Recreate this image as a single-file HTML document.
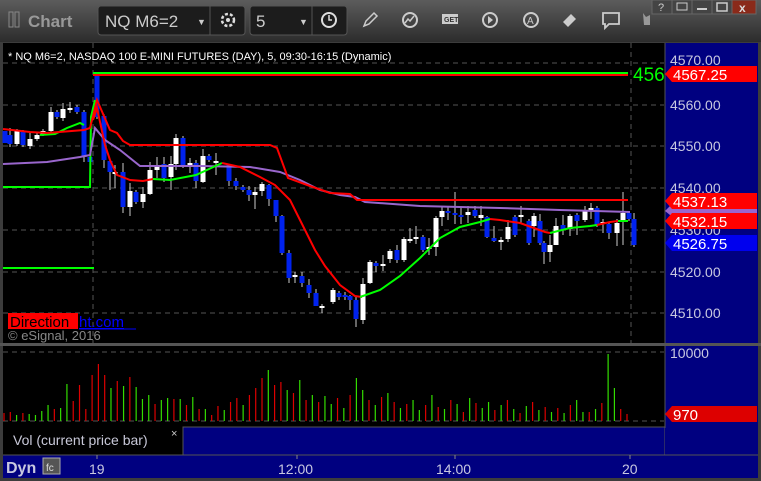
<!DOCTYPE html>
<html><head><meta charset="utf-8"><style>
html,body{margin:0;padding:0;width:761px;height:481px;overflow:hidden;background:#3a3a3a;font-family:"Liberation Sans",sans-serif}
</style></head><body>
<svg width="761" height="481" xmlns="http://www.w3.org/2000/svg" font-family="Liberation Sans, sans-serif">
<defs><linearGradient id="tb" x1="0" y1="0" x2="0" y2="1"><stop offset="0" stop-color="#5c5c5c"/><stop offset="1" stop-color="#2c2c2c"/></linearGradient></defs>
<rect width="761" height="481" fill="#3c3c3c"/>
<rect width="761" height="42" fill="url(#tb)"/>
<rect x="9" y="12" width="4" height="15" fill="none" stroke="#888"/><rect x="15" y="12" width="4" height="15" fill="none" stroke="#888"/>
<text x="28" y="27" font-size="17" font-weight="bold" fill="#999">Chart</text>
<rect x="98" y="6" width="147" height="29" rx="3" fill="#1c1c1c" stroke="#555"/>
<line x1="210" y1="6" x2="210" y2="35" stroke="#555"/>
<text x="105" y="27" font-size="17" fill="#ccc">NQ M6=2</text>
<text x="197" y="25" font-size="9" fill="#ccc">▼</text>
<circle cx="228" cy="20" r="6" fill="none" stroke="#ddd" stroke-width="2.5" stroke-dasharray="3 2"/><circle cx="228" cy="20" r="2" fill="#ddd"/>
<rect x="250" y="6" width="97" height="29" rx="3" fill="#1c1c1c" stroke="#555"/>
<line x1="312" y1="6" x2="312" y2="35" stroke="#555"/>
<text x="256" y="27" font-size="17" fill="#ccc">5</text>
<text x="299" y="25" font-size="9" fill="#ccc">▼</text>
<circle cx="329" cy="20" r="7" fill="none" stroke="#ddd" stroke-width="2"/><path d="M329 15v5h3" stroke="#ddd" stroke-width="1.5" fill="none"/>
<path d="M364 26l2-5 8-8 3 3-8 8z" fill="none" stroke="#ccc" stroke-width="1.5"/>
<circle cx="410" cy="20" r="7" fill="none" stroke="#ccc" stroke-width="2"/><path d="M405 23l3-4 2 2 4-5" stroke="#ccc" fill="none" stroke-width="1.5"/>
<rect x="442" y="14" width="16" height="10" fill="#ccc"/><text x="444" y="22" font-size="7" font-weight="bold" fill="#333">GET</text>
<circle cx="490" cy="20" r="7" fill="none" stroke="#ccc" stroke-width="2"/><path d="M488 16v8l5-4z" fill="#ccc"/>
<circle cx="531" cy="20" r="7" fill="none" stroke="#ccc" stroke-width="2"/><text x="527" y="24" font-size="10" fill="#ccc">A</text>
<path d="M563 22l8-8 5 5-8 8z" fill="#ccc"/>
<path d="M603 13h16v11h-10l-4 4v-4h-2z" fill="none" stroke="#ccc" stroke-width="1.8"/>
<path d="M643 13l3 4 4-2v10h-6z" fill="#999"/>
<rect x="652" y="0" width="20" height="14" fill="#444" stroke="#666"/><text x="658" y="11" font-size="11" fill="#ccc">?</text>
<rect x="672" y="0" width="20" height="14" fill="#444" stroke="#666"/><rect x="677" y="3" width="10" height="7" fill="none" stroke="#ccc"/>
<rect x="692" y="0" width="20" height="14" fill="#444" stroke="#666"/><rect x="697" y="8" width="10" height="2" fill="#ccc"/>
<rect x="712" y="0" width="20" height="14" fill="#444" stroke="#666"/><rect x="717" y="3" width="10" height="8" fill="none" stroke="#ccc" stroke-width="1.5"/>
<rect x="732" y="0" width="24" height="14" fill="#8a2a1a" stroke="#666"/><text x="739" y="12" font-size="12" font-weight="bold" fill="#ddd">x</text>

<rect x="3" y="43" width="662" height="300" fill="#000"/>
<rect x="665" y="43" width="93" height="300" fill="#000080"/>
<line x1="665" y1="43" x2="665" y2="343" stroke="#555"/>
<g stroke="#555" stroke-dasharray="5 4">
<line x1="3" y1="63" x2="664" y2="63"/><line x1="3" y1="105" x2="664" y2="105"/><line x1="3" y1="146" x2="664" y2="146"/><line x1="3" y1="188" x2="664" y2="188"/><line x1="3" y1="230" x2="664" y2="230"/><line x1="3" y1="272" x2="664" y2="272"/><line x1="3" y1="313" x2="664" y2="313"/>
<line x1="93" y1="43" x2="93" y2="343"/><line x1="631" y1="43" x2="631" y2="343"/>
</g>
<text x="8" y="60" font-size="11" fill="#fff">* NQ M6=2, NASDAQ 100 E-MINI FUTURES (DAY), 5, 09:30-16:15 (Dynamic)</text>
<g id="candles"></g>
<g fill="none" stroke-width="2">
<polyline stroke="#00ff00" points="3,187 90,187 91,117 95,100"/>
<polyline stroke="#00ff00" points="3,268 94,268"/>
<polyline stroke="#00ff00" points="40,135 55,134 67,128 80,123 84,125"/>
<polyline stroke="#9966cc" points="3,164 47,162 80,157 90,155 95,128 105,140 120,150 140,166 200,166 250,167 280,172 300,180 320,190 340,195 355,197 365,202 420,206 500,208 560,210 630,212"/>
<polyline stroke="#ff0000" points="3,129 30,132 47,133 84,130 90,128 97,100 110,130 117,133 123,141 130,145 270,145 277,148 288,178 310,186 330,193 350,194 357,200 628,200"/>
<polyline stroke="#ff0000" points="93,120 97,108 105,145 110,160 117,175 130,180 143,181 153,179"/>
<polyline stroke="#00ff00" points="153,179 170,180 196,175 222,163"/>
<polyline stroke="#ff0000" points="222,163 240,167 260,177 275,185 290,200 300,220 315,250 325,266 340,285 355,296 362,297"/>
<polyline stroke="#00ff00" points="360,297 380,290 400,276 420,258 440,238 460,227 480,222 490,219"/>
<polyline stroke="#ff0000" points="490,219 500,220 520,223 545,232 550,233"/>
<polyline stroke="#00ff00" points="550,233 570,228 590,226 597,225"/>
<polyline stroke="#ff0000" points="597,225 610,222 618,221"/>
<polyline stroke="#00ff00" points="618,221 628,221"/>
<line stroke="#00ff00" x1="93" y1="73" x2="628" y2="73"/>
<line stroke="#ff0000" x1="93" y1="75" x2="628" y2="75"/>
</g>
<text x="633" y="81" font-size="19" fill="#00ff00">456</text>
<g font-size="14" fill="#c8c8e0">
<text x="670" y="65">4570.00</text><text x="670" y="110">4560.00</text><text x="670" y="151">4550.00</text><text x="670" y="193">4540.00</text><text x="670" y="235">4530.00</text><text x="670" y="277">4520.00</text><text x="670" y="318">4510.00</text>
</g>
<polygon points="665,74 672,66 757,66 757,82 672,82" fill="#ff0000"/><text x="673" y="80" font-size="15" fill="#fff">4567.25</text>
<polygon points="665,211 670,206 757,206 757,215 670,215" fill="#9966cc"/>
<polygon points="665,201 672,193 757,193 757,209 672,209" fill="#ff0000"/><text x="673" y="207" font-size="15" fill="#fff">4537.13</text>
<polygon points="665,221 672,213 757,213 757,229 672,229" fill="#ff0000"/><text x="673" y="227" font-size="15" fill="#fff">4532.15</text>
<polygon points="665,243 672,235 757,235 757,251 672,251" fill="#0000ee"/><text x="673" y="249" font-size="15" fill="#fff">4526.75</text>
<rect x="8" y="313" width="70" height="16" fill="#ff0000"/><text x="10" y="327" font-size="15" fill="#000">Direction</text>
<text x="79" y="327" font-size="15" fill="#0000ff" text-decoration="underline">ht.com</text>
<line x1="79" y1="329" x2="136" y2="329" stroke="#0000ff"/>
<text x="8" y="340" font-size="13" fill="#888">© eSignal, 2016</text>
<rect x="0" y="343" width="761" height="3" fill="#555"/>
<rect x="3" y="346" width="662" height="82" fill="#000"/>
<rect x="665" y="346" width="93" height="82" fill="#000080"/>
<line x1="665" y1="346" x2="665" y2="428" stroke="#555"/>
<g stroke="#555" stroke-dasharray="5 4"><line x1="3" y1="352" x2="664" y2="352"/><line x1="3" y1="421" x2="664" y2="421"/></g>
<g id="vols"></g>
<text x="670" y="358" font-size="14" fill="#c8c8e0">10000</text>
<polygon points="665,414 672,406 757,406 757,422 672,422" fill="#dd0000"/><text x="673" y="420" font-size="15" fill="#fff">970</text>
<rect x="3" y="428" width="180" height="27" fill="#000"/>
<text x="13" y="445" font-size="14" fill="#c8c8d8">Vol (current price bar)</text>
<text x="171" y="437" font-size="11" fill="#ccc">×</text>
<rect x="183" y="427" width="482" height="28" fill="#000080" stroke="#555"/>
<rect x="665" y="428" width="93" height="27" fill="#000080"/>
<rect x="3" y="455" width="755" height="23" fill="#000080"/>
<line x1="3" y1="455" x2="758" y2="455" stroke="#555"/>
<text x="6" y="473" font-size="16" font-weight="bold" fill="#c8c8e0">Dyn</text>
<rect x="43" y="458" width="17" height="16" fill="#555" stroke="#aaa"/><text x="46" y="471" font-size="10" fill="#ddd">fc</text>
<g font-size="14" fill="#c8c8e0"><text x="89" y="474">19</text><text x="278" y="474">12:00</text><text x="436" y="474">14:00</text><text x="622" y="474">20</text></g>
<g stroke="#888"><line x1="97" y1="455" x2="97" y2="459"/><line x1="297" y1="455" x2="297" y2="459"/><line x1="455" y1="455" x2="455" y2="459"/><line x1="630" y1="455" x2="630" y2="459"/></g>
</svg>
<script>
var C=[[5,131,143,131,143,0],[10,135,144,128,147,0],[17,131,144,129,146,1],[23,131,145,130,147,0],[30,139,146,133,149,1],[37,135,139,133,141,1],[43,131,134,129,136,1],[51,112,131,107,134,1],[57,112,117,110,119,0],[63,109,118,103,121,1],[70,108,110,102,113,1],[77,107,112,105,114,0],[84,112,157,110,162,0],[90,157,162,155,170,0],[97,75,117,74,119,0],[104,116,160,114,168,0],[110,161,172,160,190,0],[115,172,173,165,188,1],[123,172,207,163,213,0],[130,191,207,183,216,1],[136,192,202,190,204,0],[143,194,202,187,208,1],[150,170,194,162,195,1],[157,165,170,157,178,1],[164,164,178,157,182,0],[171,164,177,156,190,1],[176,138,164,134,170,1],[183,138,166,136,168,0],[190,163,165,158,173,1],[196,163,181,160,188,0],[203,156,182,149,183,1],[209,156,160,154,162,0],[216,161,163,153,175,1],[229,165,181,165,186,0],[236,181,186,178,190,0],[243,187,190,185,192,0],[249,190,195,186,201,0],[255,192,195,187,209,1],[262,184,191,182,196,1],[269,185,199,184,206,0],[276,200,216,200,222,0],[282,216,253,215,255,0],[289,253,278,250,283,0],[295,275,277,272,283,1],[302,276,283,272,287,0],[309,285,293,279,298,0],[316,293,306,289,306,0],[322,306,308,304,313,1],[333,290,302,288,304,1],[339,293,297,291,300,0],[345,295,297,292,300,0],[350,296,300,295,310,0],[356,300,319,297,327,0],[363,284,320,278,324,1],[370,262,283,260,284,1],[376,263,266,261,272,0],[383,264,266,255,271,1],[390,251,259,249,263,1],[397,250,260,245,263,0],[404,239,260,237,262,1],[410,239,240,228,243,1],[416,237,239,226,244,1],[423,237,250,235,252,0],[429,247,248,238,255,1],[436,218,247,216,256,1],[442,211,217,206,226,1],[448,211,213,206,220,0],[455,213,215,192,224,0],[461,215,217,207,224,0],[468,212,215,206,223,1],[475,210,216,206,218,0],[481,215,218,206,226,1],[487,217,237,216,238,0],[494,238,241,226,242,0],[501,240,242,237,250,1],[508,227,239,220,242,1],[515,217,235,215,237,0],[521,215,217,206,223,1],[529,221,243,219,245,0],[534,216,226,213,237,1],[540,221,243,214,245,0],[544,243,252,241,264,0],[550,245,252,235,262,1],[556,226,245,218,245,1],[563,225,230,215,235,0],[570,216,229,214,236,1],[577,215,221,213,235,0],[585,210,220,206,222,1],[591,208,210,203,219,1],[597,208,225,206,227,0],[603,222,224,219,233,1],[609,224,233,222,239,0],[617,223,233,219,246,1],[623,213,221,192,245,1],[629,213,219,211,221,0],[634,219,245,213,247,0]];
var ns="http://www.w3.org/2000/svg",g=document.getElementById("candles"),s="";
C.forEach(function(c){var col=c[5]?"#fff":"#0022ee";s+='<line x1="'+c[0]+'" x2="'+c[0]+'" y1="'+c[3]+'" y2="'+c[4]+'" stroke="#ccc"/>';s+='<rect x="'+(c[0]-2.5)+'" y="'+c[1]+'" width="5" height="'+Math.max(2,c[2]-c[1])+'" fill="'+col+'"/>';});
g.innerHTML=s;
var V=[[413,0],[412,0],[415,1],[413,0],[414,1],[415,1],[411,1],[405,1],[409,0],[408,1],[384,1],[401,0],[385,0],[409,0],[375,0],[364,0],[375,0],[388,1],[381,0],[386,1],[377,0],[387,1],[399,1],[395,1],[404,0],[400,1],[398,1],[399,0],[399,1],[405,0],[397,1],[409,0],[409,1],[415,0],[406,0],[410,1],[402,0],[398,0],[405,1],[395,0],[388,0],[378,0],[370,1],[385,0],[382,0],[390,1],[393,0],[380,1],[400,0],[395,1],[402,0],[396,1],[404,1],[398,0],[408,1],[395,0],[378,1],[390,1],[400,0],[405,1],[397,0],[393,1],[402,0],[408,1],[404,0],[400,1],[410,1],[405,0],[395,1],[407,0],[409,1],[400,0],[404,1],[412,0],[398,1],[403,0],[408,1],[402,1],[410,0],[405,1],[400,0],[409,1],[413,0],[406,1],[402,0],[410,1],[407,0],[412,1],[408,0],[413,1],[405,0],[400,1],[412,1],[412,0],[409,1],[403,0],[354,1],[388,1],[409,0],[414,0]];
var vs="",vg=document.getElementById("vols");var n=V.length;
V.forEach(function(v,i){var x=4+i*(623/(n-1));vs+='<line x1="'+x+'" x2="'+x+'" y1="'+v[0]+'" y2="421" stroke="'+(v[1]?"#33dd00":"#dd0000")+'" stroke-width="1.2"/>';});
vg.innerHTML=vs;
</script>
</body></html>
